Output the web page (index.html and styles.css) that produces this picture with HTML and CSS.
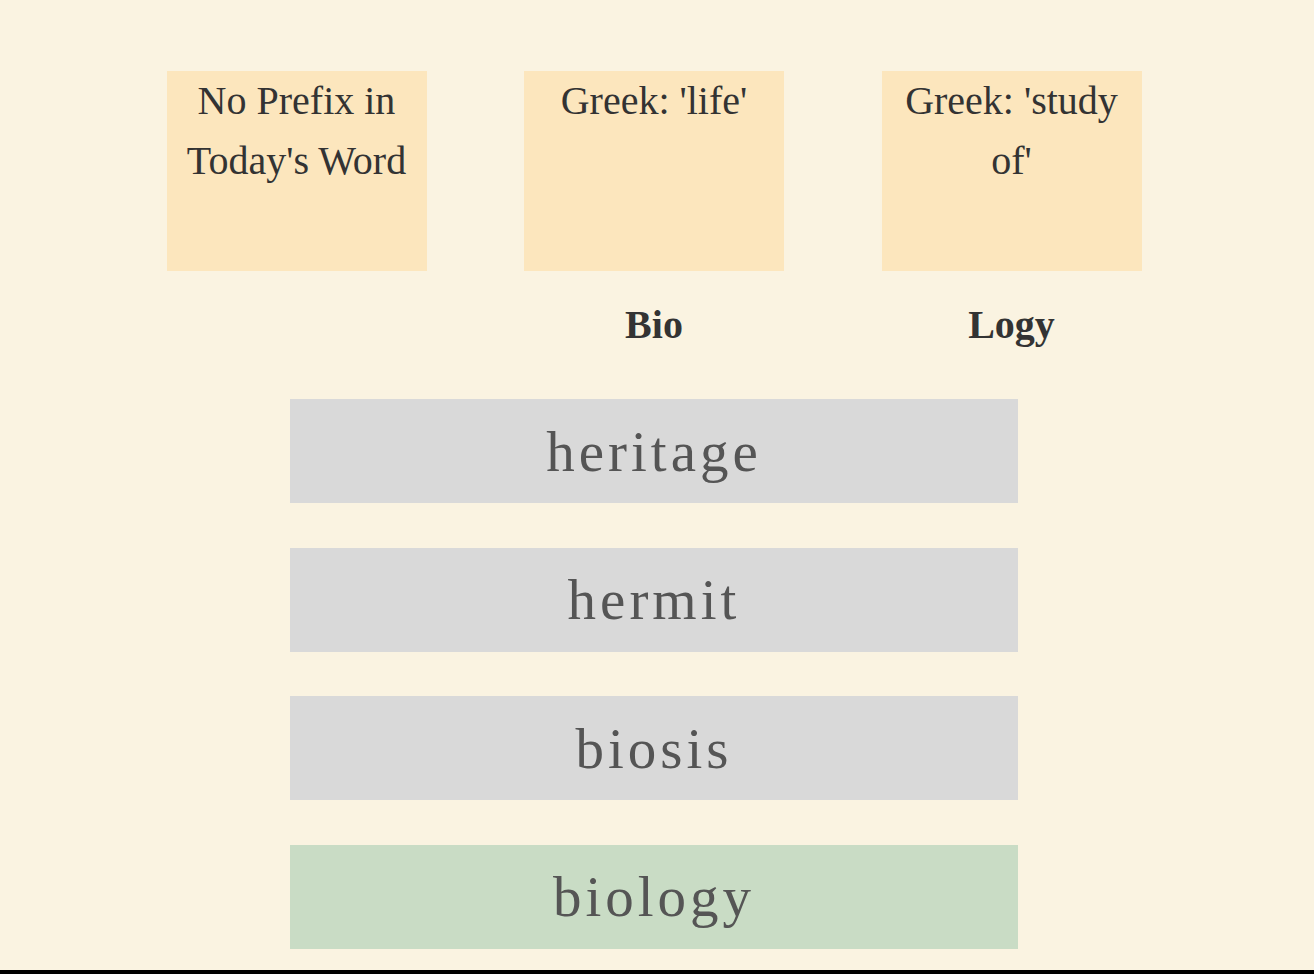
FILE: index.html
```html
<!DOCTYPE html>
<html lang="en">
<head>
<meta charset="utf-8">
<title>Word Roots</title>
<link rel="stylesheet" href="styles.css">
</head>
<body>
<main class="page">
  <section class="roots">
    <div class="root">
      <div class="card">No Prefix in Today's Word</div>
      <div class="label"></div>
    </div>
    <div class="root">
      <div class="card">Greek: 'life'</div>
      <div class="label">Bio</div>
    </div>
    <div class="root">
      <div class="card">Greek: 'study of'</div>
      <div class="label">Logy</div>
    </div>
  </section>
  <section class="words">
    <div class="word">heritage</div>
    <div class="word">hermit</div>
    <div class="word">biosis</div>
    <div class="word word-correct">biology</div>
  </section>
</main>
</body>
</html>
```

FILE: styles.css
```css
html {
  background: #000;
}

body {
  margin: 0;
  height: 970px;
  background: #faf3e1;
  font-family: "Liberation Serif", "Times New Roman", serif;
  color: #333;
  overflow: hidden;
}

.page {
  width: 1308px;
  padding-top: 71px;
  display: flex;
  flex-direction: column;
  align-items: center;
}

.roots {
  display: flex;
  justify-content: center;
  gap: 97.5px;
}

.root {
  width: 260px;
  display: flex;
  flex-direction: column;
  align-items: center;
}

.card {
  width: 260px;
  height: 200px;
  background: #fce6bd;
  font-size: 40px;
  line-height: 60px;
  text-align: center;
  color: #333;
}

.label {
  margin-top: 24px;
  height: 60px;
  font-size: 40px;
  line-height: 60px;
  font-weight: bold;
  text-align: center;
  color: #333;
}

.words {
  margin-top: 44px;
  display: flex;
  flex-direction: column;
  gap: 44.67px;
}

.word {
  width: 728px;
  height: 104px;
  background: #d9d9d9;
  display: flex;
  align-items: center;
  justify-content: center;
  font-size: 57px;
  letter-spacing: 4px;
  color: #555;
}

.word-correct {
  background: #c9dcc5;
}
```
